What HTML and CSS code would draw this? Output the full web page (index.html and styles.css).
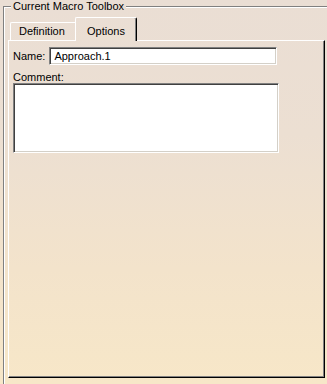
FILE: index.html
```html
<!DOCTYPE html>
<html lang="en">
<head>
    <meta charset="UTF-8">
    <title>Current Macro Toolbox</title>
    <link rel="stylesheet" href="styles.css">
</head>
<body>
    <fieldset class="group">
        <legend>Current Macro Toolbox</legend>
        <div class="tabs">
            <div class="tab">Definition</div>
            <div class="tab active">Options</div>
        </div>
        <div class="panel">
            <div class="form-row">
                <label for="name">Name:</label>
                <input type="text" id="name" value="Approach.1">
            </div>
            <label class="comment-label" for="comment">Comment:</label>
            <textarea id="comment"></textarea>
        </div>
    </fieldset>
</body>
</html>
```

FILE: styles.css
```css
html, body {
    height: 100%;
}

body {
    margin: 0;
    font-family: "Liberation Sans", Arial, sans-serif;
    font-size: 11px;
    color: #000;
    background: linear-gradient(#eaded4 0%, #ecdfd2 35%, #f3e3cb 70%, #f7e7c8 100%);
    overflow: hidden;
}

.group {
    margin: 0 0 0 3px;
    padding: 0;
    min-height: 400px;
    border: none;
    border-top: 1px solid #808080;
    border-left: 1px solid #808080;
    box-shadow: inset 1px 1px 0 #fff;
}

.group legend {
    margin-left: 7px;
    padding: 0 2px;
    line-height: 13px;
    background-color: #eaded4;
}

.tabs {
    display: flex;
    align-items: flex-end;
    margin: 4px 0 0 6px;
    height: 23px;
    position: relative;
    z-index: 1;
}

.tab {
    height: 17px;
    line-height: 17px;
    padding: 0 7px 0 8px;
    border-top: 1px solid #fff;
    border-left: 1px solid #fff;
    border-top-left-radius: 2px;
    width: 49px;
}

.tab.active {
    height: 18px;
    line-height: 17px;
    width: 49px;
    padding: 5px 0 0 11px;
    margin-bottom: -1px;
    border-right: 1px solid #000;
    box-shadow: inset -1px 0 0 #808080;
    border-top-right-radius: 2px;
    background: linear-gradient(#eaded4, #ebdfd3);
}

.panel {
    margin-left: 4px;
    width: 311px;
    height: 330px;
    padding: 6px 0 0 4px;
    border-top: 1px solid #fff;
    border-left: 1px solid #fff;
    border-right: 1px solid #000;
    border-bottom: 1px solid #000;
    box-shadow: inset -1px -1px 0 #808080;
}

.form-row {
    display: flex;
    align-items: center;
    gap: 4px;
}

input, textarea {
    font-family: "Liberation Sans", Arial, sans-serif;
    font-size: 11px;
    background-color: #fff;
    border: 1px solid;
    border-color: #808080 #fff #fff #808080;
    box-shadow: inset 1px 1px 0 #404040, inset -1px -1px 0 #d4d0c8;
    outline: none;
    margin: 0;
    border-radius: 0;
}

input {
    width: 228px;
    height: 18px;
    padding: 0 0 0 4px;
    box-sizing: border-box;
}

.comment-label {
    display: block;
    margin-top: 7px;
    line-height: 11px;
}

textarea {
    display: block;
    margin-top: 0;
    width: 266px;
    height: 70px;
    padding: 2px;
    box-sizing: border-box;
    resize: none;
}
```
